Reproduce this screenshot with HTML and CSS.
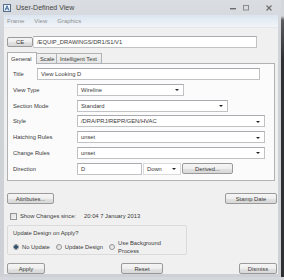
FILE: index.html
```html
<!DOCTYPE html>
<html lang="en">
<head>
<meta charset="UTF-8" />
<title>User-Defined View</title>
<link rel="stylesheet" href="styles.css">
</head>
<body>
<div class="win">
  <div class="titlebar">
    <svg class="app-icon" width="8" height="8" viewBox="0 0 8 8">
      <rect x="0.5" y="0.5" width="7" height="7" fill="#eef3f8" stroke="#55708f"/>
      <path d="M2 6.5 L4 1.8 L6 6.5 M2.8 4.8 H5.2" fill="none" stroke="#2c5d93" stroke-width="0.9"/>
    </svg>
    <span class="title">User-Defined View</span>
    <div class="wctl">
      <svg width="8" height="6" viewBox="0 0 8 6"><rect x="1" y="3" width="6" height="1.4" fill="#6b6b6b"/></svg>
      <svg width="8" height="6" viewBox="0 0 8 6"><rect x="1.5" y="0.5" width="5" height="4.5" fill="none" stroke="#8a8a8a"/></svg>
      <svg class="x" width="8" height="6" viewBox="0 0 8 6"><path d="M1.5 0.5 L6.5 5.5 M6.5 0.5 L1.5 5.5" stroke="#6b6b6b" stroke-width="1.1"/></svg>
    </div>
  </div>
  <div class="client">
    <nav class="menubar"><span>Frame</span><span>View</span><span>Graphics</span></nav>
    <div class="content">
      <div class="ce-row">
        <div class="btn ce">CE</div>
        <div class="field path">/EQUIP_DRAWINGS/DR1/S1/V1</div>
      </div>

      <div class="tabs">
        <span class="tab active">General</span>
        <span class="tab">Scale</span>
        <span class="tab">Intelligent Text</span>
      </div>
      <div class="panel">
        <div class="row">
          <span class="lbl short">Title</span>
          <div class="field title-field">View Looking D</div>
        </div>
        <div class="row">
          <span class="lbl">View Type</span>
          <div class="combo w-view">Wireline</div>
        </div>
        <div class="row">
          <span class="lbl">Section Mode</span>
          <div class="combo w-section">Standard</div>
        </div>
        <div class="row">
          <span class="lbl">Style</span>
          <div class="combo w-full">/DRA/PRJ/REPR/GEN/HVAC</div>
        </div>
        <div class="row">
          <span class="lbl">Hatching Rules</span>
          <div class="combo w-full">unset</div>
        </div>
        <div class="row">
          <span class="lbl">Change Rules</span>
          <div class="combo w-full">unset</div>
        </div>
        <div class="row">
          <span class="lbl">Direction</span>
          <div class="field w-dir">D</div>
          <div class="combo flat w-down">Down</div>
          <div class="btn w-derived">Derived...</div>
        </div>
      </div>

      <div class="btn-row">
        <div class="btn w-attr">Attributes...</div>
        <div class="btn w-stamp">Stamp Date</div>
      </div>

      <div class="chk-row">
        <span class="chk"></span>
        <span>Show Changes since:</span>
        <span class="date">20:04 7 January 2013</span>
      </div>

      <div class="group">
        <div class="group-title">Update Design on Apply?</div>
        <div class="radios">
          <span class="radio on"></span><span>No Update</span>
          <span class="radio"></span><span>Update Design</span>
          <span class="radio"></span><span class="two-line">Use Background<br>Process</span>
        </div>
      </div>

      <div class="footer">
        <div class="btn w-foot">Apply</div>
        <div class="btn w-reset">Reset</div>
        <div class="btn w-foot">Dismiss</div>
      </div>
    </div>
  </div>
</div>
</body>
</html>
```

FILE: styles.css
```css
:root {
  --face:#f0f0f0;
  --text:#3a3a3a;
  --field-border:#c0c2c6;
  --btn-border:#9a9a9a;
  --ui:"Liberation Sans",Arial,sans-serif;
}

body { margin:0; background:linear-gradient(#d4d7db 0 16px,#5a5c5f 20px,#2e2f31 60px); font-family:var(--ui); font-size:5.8px; color:var(--text); }

.win { width:281px; height:277px; box-sizing:border-box; background:linear-gradient(#dadde1,#d0d3d7 40px,#cdd0d4); padding:0 3px 3px 4px; display:flex; flex-direction:column; }

.titlebar { height:15px; flex:none; display:flex; align-items:center; margin-left:-1px; }
.app-icon { margin:0 5px 0 0; }
.title { font-size:7px; color:#444; }
.wctl { margin-left:auto; display:flex; align-items:center; gap:5px; margin-right:5px; }
.wctl .x { margin-left:10px; }

.client { flex:1; background:var(--face); display:flex; flex-direction:column; }
.menubar { height:13px; flex:none; display:flex; align-items:center; gap:10px; padding-left:3px; font-size:6px; color:#8f8f8f; background:linear-gradient(#dbe4ef,#e6edf5 6px,#f2f4f7); border-bottom:1px solid #e3e8ee; box-sizing:border-box; }

.content { flex:1; display:flex; flex-direction:column; padding:8px 1px 0 3px; }

.field, .combo { height:12px; box-sizing:border-box; background:#fff; border:1px solid var(--field-border); border-top-color:#a9abb0; display:flex; align-items:center; padding-left:3px; white-space:nowrap; overflow:hidden; }
.combo { position:relative; padding-right:10px; }
.combo::after { content:""; position:absolute; right:4px; top:4.5px; border:2px solid transparent; border-top:2.5px solid #222; border-bottom:0; }
.combo.flat { border-color:#dadada; }

.btn { height:11px; box-sizing:border-box; border:1px solid var(--btn-border); border-radius:2px; background:linear-gradient(#f5f5f5,#eeeeee 50%,#e2e2e2 51%,#d8d8d8); display:flex; align-items:center; justify-content:center; white-space:nowrap; }

.ce-row { display:flex; align-items:center; height:12px; }
.ce { width:26px; height:10.5px; }
.path { flex:none; width:224px; border-left-color:#dcdcdc; }

.tabs { display:flex; margin-top:4px; height:11px; align-items:flex-end; }
.tab { height:10px; box-sizing:border-box; border:1px solid #b0b2b6; border-bottom:0; padding:0 3px; display:flex; align-items:center; background:linear-gradient(#f2f2f2,#e5e5e5); margin-right:-1px; }
.tab.active { background:#fbfbfb; position:relative; z-index:1; margin-bottom:-1px; height:12px; }
.tabs .tab:first-child { width:30px; }
.tabs .tab:nth-child(2) { width:21px; }
.tabs .tab:nth-child(3) { width:46px; }

.panel { height:118px; box-sizing:border-box; border:1px solid #b0b2b6; background:#fbfbfb; margin-right:2px; padding:4px 0 0 5px; display:flex; flex-direction:column; gap:3.8px; }
.row { display:flex; align-items:center; height:12px; }
.lbl { width:64px; flex:none; }
.lbl.short { width:24px; }
.title-field { width:223px; }
.w-view { width:107px; }
.w-section { width:151px; }
.w-full { width:188px; }
.w-dir { width:65px; }
.w-down { width:38px; margin-left:1px; }
.w-derived { width:51px; margin-left:1px; }

.btn-row { display:flex; justify-content:space-between; margin-top:12px; }
.w-attr { width:47px; }
.w-stamp { width:52px; }

.chk-row { display:flex; align-items:center; margin-top:8px; height:8px; padding-left:3px; }
.chk { width:7px; height:7px; box-sizing:border-box; border:1px solid #959696; background:linear-gradient(135deg,#dcdcdc,#f6f6f6); margin-right:3px; }
.date { margin-left:8px; }

.group { margin-top:5px; width:180px; height:30px; box-sizing:border-box; border:1px solid #dadada; border-radius:2px; padding:3px 0 0 5px; }
.group-title { height:8px; line-height:8px; }
.radios { display:flex; align-items:center; margin-top:3px; height:14px; }
.radio { width:6px; height:6px; box-sizing:border-box; border-radius:50%; border:1px solid #959696; background:linear-gradient(135deg,#d8d8d8,#f6f6f6); margin:0 3px 0 0; flex:none; }
.radio.on { background:radial-gradient(circle,#2b4f6e 0 1.6px,#e8e8e8 1.8px); }
.radios .radio + span { margin-right:6px; }
.two-line { line-height:8.5px; }

.footer { display:flex; justify-content:space-between; margin-top:8px; }
.w-foot { width:38px; }
.w-reset { width:42px; }
```
